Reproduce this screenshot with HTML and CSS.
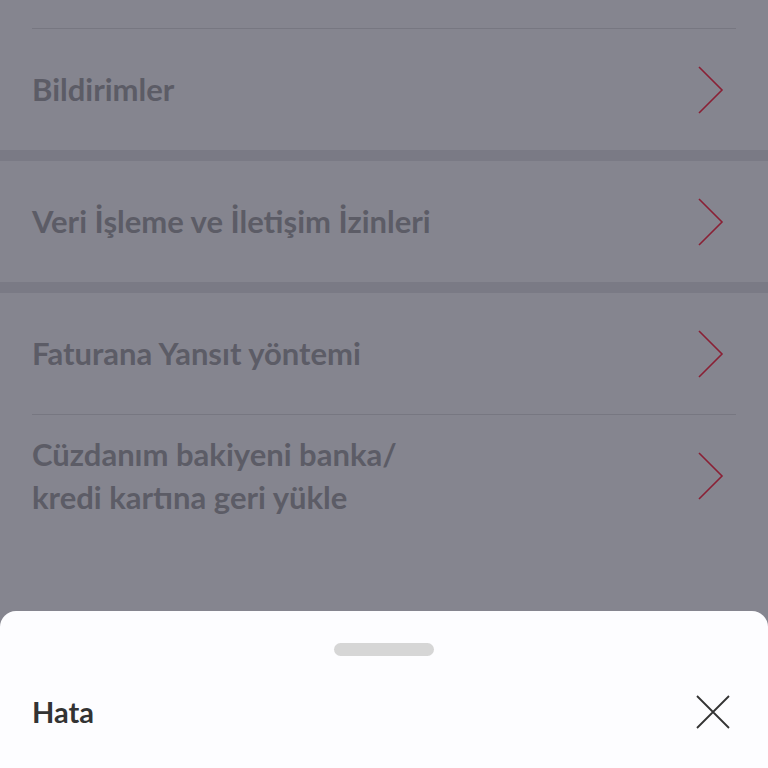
FILE: index.html
```html
<!DOCTYPE html>
<html lang="tr">
<head>
    <meta charset="UTF-8">
    <meta name="viewport" content="width=device-width, initial-scale=1.0">
    <title>Ayarlar</title>
    <link rel="stylesheet" href="styles.css">
</head>
<body>
    <div class="page">
        <div class="top-space"></div>

        <div class="group">
            <div class="row">
                <span class="row-label">Bildirimler</span>
                <svg class="chevron" viewBox="0 0 28 48"><path d="M2 1 L25 24 L2 47" /></svg>
            </div>
        </div>

        <div class="group">
            <div class="row">
                <span class="row-label">Veri İşleme ve İletişim İzinleri</span>
                <svg class="chevron" viewBox="0 0 28 48"><path d="M2 1 L25 24 L2 47" /></svg>
            </div>
        </div>

        <div class="group last">
            <div class="row">
                <span class="row-label">Faturana Yansıt yöntemi</span>
                <svg class="chevron" viewBox="0 0 28 48"><path d="M2 1 L25 24 L2 47" /></svg>
            </div>
            <div class="row tall">
                <span class="row-label">Cüzdanım bakiyeni banka/<br>kredi kartına geri yükle</span>
                <svg class="chevron" viewBox="0 0 28 48"><path d="M2 1 L25 24 L2 47" /></svg>
            </div>
        </div>
    </div>

    <div class="sheet">
        <div class="handle"></div>
        <div class="sheet-head">
            <h2 class="sheet-title">Hata</h2>
            <svg class="close" viewBox="0 0 34 34"><path d="M1 1 L33 33 M33 1 L1 33" /></svg>
        </div>
    </div>
</body>
</html>
```

FILE: styles.css
```css
html, body {
    margin: 0;
    padding: 0;
    height: 100%;
    overflow: hidden;
}

body {
    font-family: Lato, "Open Sans", sans-serif;
    background: #85858f;
}

.page {
    height: 768px;
}

.top-space {
    height: 28px;
    margin: 0 32px;
    border-bottom: 1px solid #777781;
}

.group {
    border-bottom: 11px solid #7a7a85;
}

.group.last {
    border-bottom: none;
}

.row {
    display: flex;
    align-items: center;
    justify-content: space-between;
    height: 121px;
    margin: 0 32px;
}

.row + .row {
    border-top: 1px solid #777781;
}

.row.tall {
    height: 121px;
}

.row-label {
    font-size: 31px;
    font-weight: 700;
    color: #5c5c66;
    line-height: 43px;
}

.chevron {
    width: 28px;
    height: 48px;
    margin-right: 11px;
    fill: none;
    stroke: #8a2035;
    stroke-width: 1.6;
}

.sheet {
    position: fixed;
    left: 0;
    right: 0;
    bottom: 0;
    height: 157px;
    background: #fdfdff;
    border-radius: 16px 16px 0 0;
}

.handle {
    width: 100px;
    height: 13px;
    margin: 32px auto 0;
    background: #d6d6d6;
    border-radius: 7px;
}

.sheet-head {
    display: flex;
    align-items: center;
    justify-content: space-between;
    margin: 38px 38px 0 32px;
}

.sheet-title {
    margin: 0;
    font-size: 29px;
    font-weight: 700;
    color: #333333;
}

.close {
    width: 34px;
    height: 34px;
    fill: none;
    stroke: #333333;
    stroke-width: 1.8;
}
```
